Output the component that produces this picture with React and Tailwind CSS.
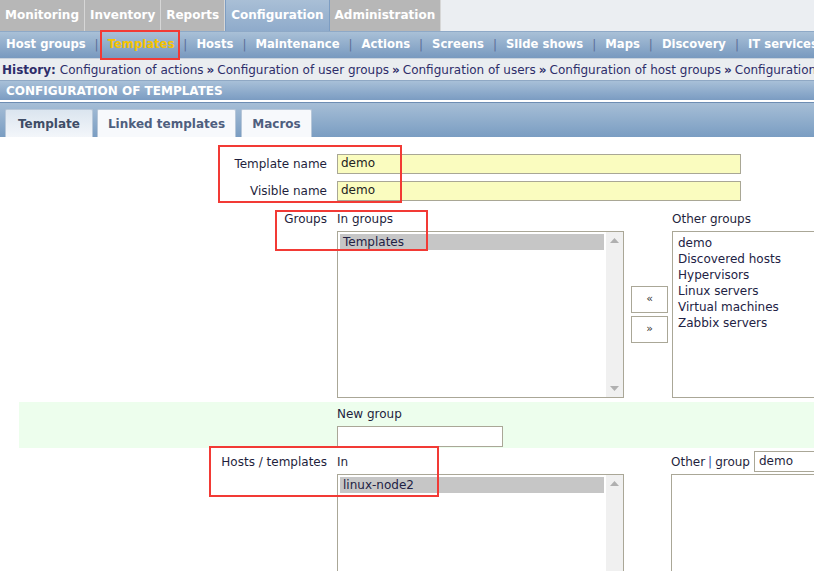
import React from "react";

const F = { fontFamily: '"DejaVu Sans", Verdana, sans-serif' };

function RedBox({ className }) {
  return <div className={"absolute border-2 border-[#f23a35] pointer-events-none " + className} />;
}

function Scrollbar() {
  return (
    <div className="w-[17px] shrink-0 h-full bg-[#f0f0f0] flex flex-col justify-between items-center py-[6px]">
      <svg width="9" height="5" viewBox="0 0 9 5"><path d="M0 5 L4.5 0 L9 5 Z" fill="#b0b0b0" /></svg>
      <svg width="9" height="5" viewBox="0 0 9 5"><path d="M0 0 L4.5 5 L9 0 Z" fill="#b0b0b0" /></svg>
    </div>
  );
}

function ListBox({ items, selected, scroll, className = "" }) {
  return (
    <div className={"border border-[#aaa797] bg-white flex shrink-0 " + className}>
      <div className="flex-1 p-[2px] min-w-0">
        {items.map((it, i) => (
          <div
            key={i}
            className={"h-[16px] leading-[16px] px-[3px] whitespace-nowrap text-[#222244] " + (selected === i ? "bg-[#c6c6c6] text-[#3a3a3a]" : "")}
          >
            {it}
          </div>
        ))}
      </div>
      {scroll && <Scrollbar />}
    </div>
  );
}

export default function App() {
  const topTabs = ["Monitoring", "Inventory", "Reports", "Configuration", "Administration"];
  const sub = ["Host groups", "Templates", "Hosts", "Maintenance", "Actions", "Screens", "Slide shows", "Maps", "Discovery", "IT services"];
  const hist = ["Configuration of actions", "Configuration of user groups", "Configuration of users", "Configuration of host groups", "Configuration of templates"];
  return (
    <div style={F} className="relative w-[814px] h-[571px] overflow-hidden bg-white text-[12px] text-[#1f1f3d]">
      {/* top tabs */}
      <div className="flex h-[31px] bg-[#ebeef2]">
        {topTabs.map((t) => {
          const active = t === "Configuration";
          return (
            <div
              key={t}
              className={
                "h-full flex items-center pb-[1px] px-[5px] font-bold text-[12px] text-white border-r shrink-0 " +
                (active
                  ? "bg-gradient-to-b from-[#a9bfd6] to-[#8fabcb] border-[#7d9dc2] border-l"
                  : "bg-[#b7b7b7] border-[#d6d6d6]")
              }
            >
              {t}
            </div>
          );
        })}
      </div>
      {/* sub menu */}
      <div className="flex items-center h-[27px] bg-gradient-to-b from-[#a9c0d7] to-[#7899bf] border-t border-[#8ea9c7] pl-[6px] whitespace-nowrap">
        {sub.map((s, i) => (
          <React.Fragment key={s}>
            {i > 0 && <span className="mx-[9px] text-[#5b6e98] text-[12px] shrink-0">|</span>}
            <span className={"font-bold text-[11.6px] shrink-0 " + (s === "Templates" ? "text-[#f5c400]" : "text-white")}>{s}</span>
          </React.Fragment>
        ))}
      </div>
      {/* history */}
      <div className="h-[22px] flex items-center bg-[#eaedf0] border-t border-[#c9d2dc] pl-[2px] whitespace-nowrap text-[#2e2e6a]">
        <span className="font-bold shrink-0">History:</span>
        {hist.map((h, i) => (
          <React.Fragment key={h}>
            {i > 0 && <span className="font-bold mx-[3px] shrink-0">»</span>}
            <span className={"shrink-0 " + (i === 0 ? "ml-[4px]" : "")}>{h}</span>
          </React.Fragment>
        ))}
      </div>
      {/* header */}
      <div className="h-[20px] flex items-center bg-gradient-to-b from-[#a8c0d8] to-[#7b9cc2] border-t border-[#8fa8c4] pl-[6px] font-bold text-white">
        CONFIGURATION OF TEMPLATES
      </div>
      <div className="h-[2px] bg-white" />
      {/* tab strip */}
      <div className="h-[35px] bg-gradient-to-b from-[#a6bed6] to-[#7a9dc2] border-t border-[#6d8db3] flex items-end pl-[5px] gap-[4px]">
        <div className="h-[28px] w-[88px] justify-center flex items-center font-bold text-[#3f4d66] bg-gradient-to-b from-[#dbe5ef] to-[#f3f6fa] border border-b-0 border-[#b7c7d9] rounded-t-[2px]">Template</div>
        <div className="h-[28px] w-[139px] justify-center flex items-center font-bold text-[#4f5f7f] bg-[#f7f9fc] border border-b-0 border-[#b7c7d9] rounded-t-[2px]">Linked templates</div>
        <div className="h-[28px] w-[71px] ml-[1px] justify-center flex items-center font-bold text-[#4f5f7f] bg-[#f7f9fc] border border-b-0 border-[#b7c7d9] rounded-t-[2px]">Macros</div>
      </div>

      {/* form */}
      <div className="pt-[17px]">
        <div className="flex items-center h-[20px]">
          <div className="w-[327px] shrink-0 text-right">Template name</div>
          <div className="ml-[10px] w-[404px] h-[20px] bg-[#fafcbf] border border-[#a9a795] px-[3px] leading-[17px] text-[#222]">demo</div>
        </div>
        <div className="flex items-center h-[20px] mt-[7px]">
          <div className="w-[327px] shrink-0 text-right">Visible name</div>
          <div className="ml-[10px] w-[404px] h-[20px] bg-[#fafcbf] border border-[#a9a795] px-[3px] leading-[17px] text-[#222]">demo</div>
        </div>

        {/* groups */}
        <div className="flex mt-[10px]">
          <div className="w-[327px] shrink-0 text-right leading-[16px]">Groups</div>
          <div className="ml-[10px] flex shrink-0">
            <div className="flex flex-col shrink-0">
              <div className="h-[16px] leading-[16px]">In groups</div>
              <ListBox className="mt-[4px] w-[287px] h-[167px]" items={["Templates"]} selected={0} scroll />
            </div>
            <div className="flex flex-col justify-center gap-[3px] pt-[20px] ml-[7px] shrink-0">
              <div className="w-[37px] h-[27px] border border-[#aaa797] bg-white flex items-center justify-center text-[11px] text-[#333]">«</div>
              <div className="w-[37px] h-[27px] border border-[#aaa797] bg-white flex items-center justify-center text-[11px] text-[#333]">»</div>
            </div>
            <div className="flex flex-col ml-[4px] shrink-0">
              <div className="h-[16px] leading-[16px]">Other groups</div>
              <ListBox
                className="mt-[4px] w-[287px] h-[167px] pt-[1px]"
                items={["demo", "Discovered hosts", "Hypervisors", "Linux servers", "Virtual machines", "Zabbix servers"]}
              />
            </div>
          </div>
        </div>

        {/* new group */}
        <div className="ml-[19px] mt-[4px] h-[46px] bg-[#edfeed] flex pt-[4px]">
          <div className="w-[308px] shrink-0" />
          <div className="ml-[10px] flex flex-col shrink-0">
            <div className="h-[16px] leading-[16px]">New group</div>
            <div className="mt-[4px] w-[166px] h-[21px] bg-white border border-[#aaa797]" />
          </div>
        </div>

        {/* hosts / templates */}
        <div className="flex mt-[1px]">
          <div className="w-[327px] shrink-0 text-right leading-[16px] pt-[5px]">Hosts / templates</div>
          <div className="ml-[10px] flex shrink-0">
            <div className="flex flex-col shrink-0">
              <div className="h-[16px] leading-[16px] mt-[5px]">In</div>
              <ListBox className="mt-[4px] w-[287px] h-[167px]" items={["linux-node2"]} selected={0} scroll />
            </div>
            <div className="w-[47px] shrink-0" />
            <div className="flex flex-col shrink-0 mt-[2px]">
              <div className="flex items-center h-[21px] whitespace-nowrap">
                <span>Other</span>
                <span className="mx-[3px] text-[#3355aa]">|</span>
                <span>group</span>
                <div className="ml-[4px] w-[80px] h-[21px] border border-[#aaa797] bg-white px-[4px] leading-[19px]">demo</div>
              </div>
              <ListBox className="mt-[2px] w-[287px] h-[167px]" items={[]} />
            </div>
          </div>
        </div>
      </div>

      {/* annotation boxes */}
      <RedBox className="left-[100px] top-[30px] w-[80px] h-[30px]" />
      <RedBox className="left-[218px] top-[145px] w-[184px] h-[58px]" />
      <RedBox className="left-[275px] top-[210px] w-[153px] h-[41px]" />
      <RedBox className="left-[209px] top-[446px] w-[230px] h-[51px]" />
    </div>
  );
}
